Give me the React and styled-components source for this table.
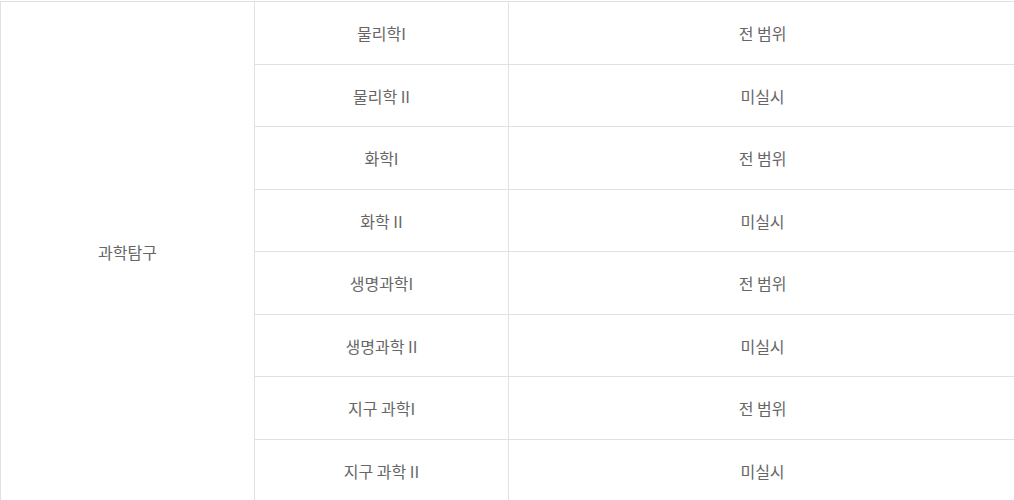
import React from "react";
import styled, { createGlobalStyle } from "styled-components";

const GlobalStyle = createGlobalStyle`
  html, body {
    margin: 0;
    padding: 0;
    background: #fff;
  }
  body {
    font-family: "Noto Sans CJK KR", "Noto Sans", sans-serif;
  }
`;

const Wrap = styled.div`
  padding-top: 1px;
  width: 1014px;
  overflow: hidden;
`;

const Table = styled.table`
  width: 1016px;
  border-collapse: collapse;
  table-layout: fixed;
`;

const Col = styled.col`
  width: ${(p) => p.$w}px;
`;

const Cell = styled.td`
  border: 1px solid #e1e1e1;
  height: ${(p) => p.$h}px;
  padding: 0;
  text-align: center;
  vertical-align: middle;
  font-size: 16px;
  color: #666;
`;

const rows = [
  ["물리학I", "전 범위"],
  ["물리학 II", "미실시"],
  ["화학I", "전 범위"],
  ["화학 II", "미실시"],
  ["생명과학I", "전 범위"],
  ["생명과학 II", "미실시"],
  ["지구 과학I", "전 범위"],
  ["지구 과학 II", "미실시"],
];

const heights = [62, 61, 62, 61, 62, 61, 62, 62];

export default function App() {
  return (
    <Wrap>
      <GlobalStyle />
      <Table>
        <colgroup>
          <Col $w={254} />
          <Col $w={254} />
          <Col $w={508} />
        </colgroup>
        <tbody>
          {rows.map(([subject, range], i) => (
            <tr key={subject}>
              {i === 0 && <Cell rowSpan={rows.length}>과학탐구</Cell>}
              <Cell $h={heights[i]}>{subject}</Cell>
              <Cell $h={heights[i]}>{range}</Cell>
            </tr>
          ))}
        </tbody>
      </Table>
    </Wrap>
  );
}
